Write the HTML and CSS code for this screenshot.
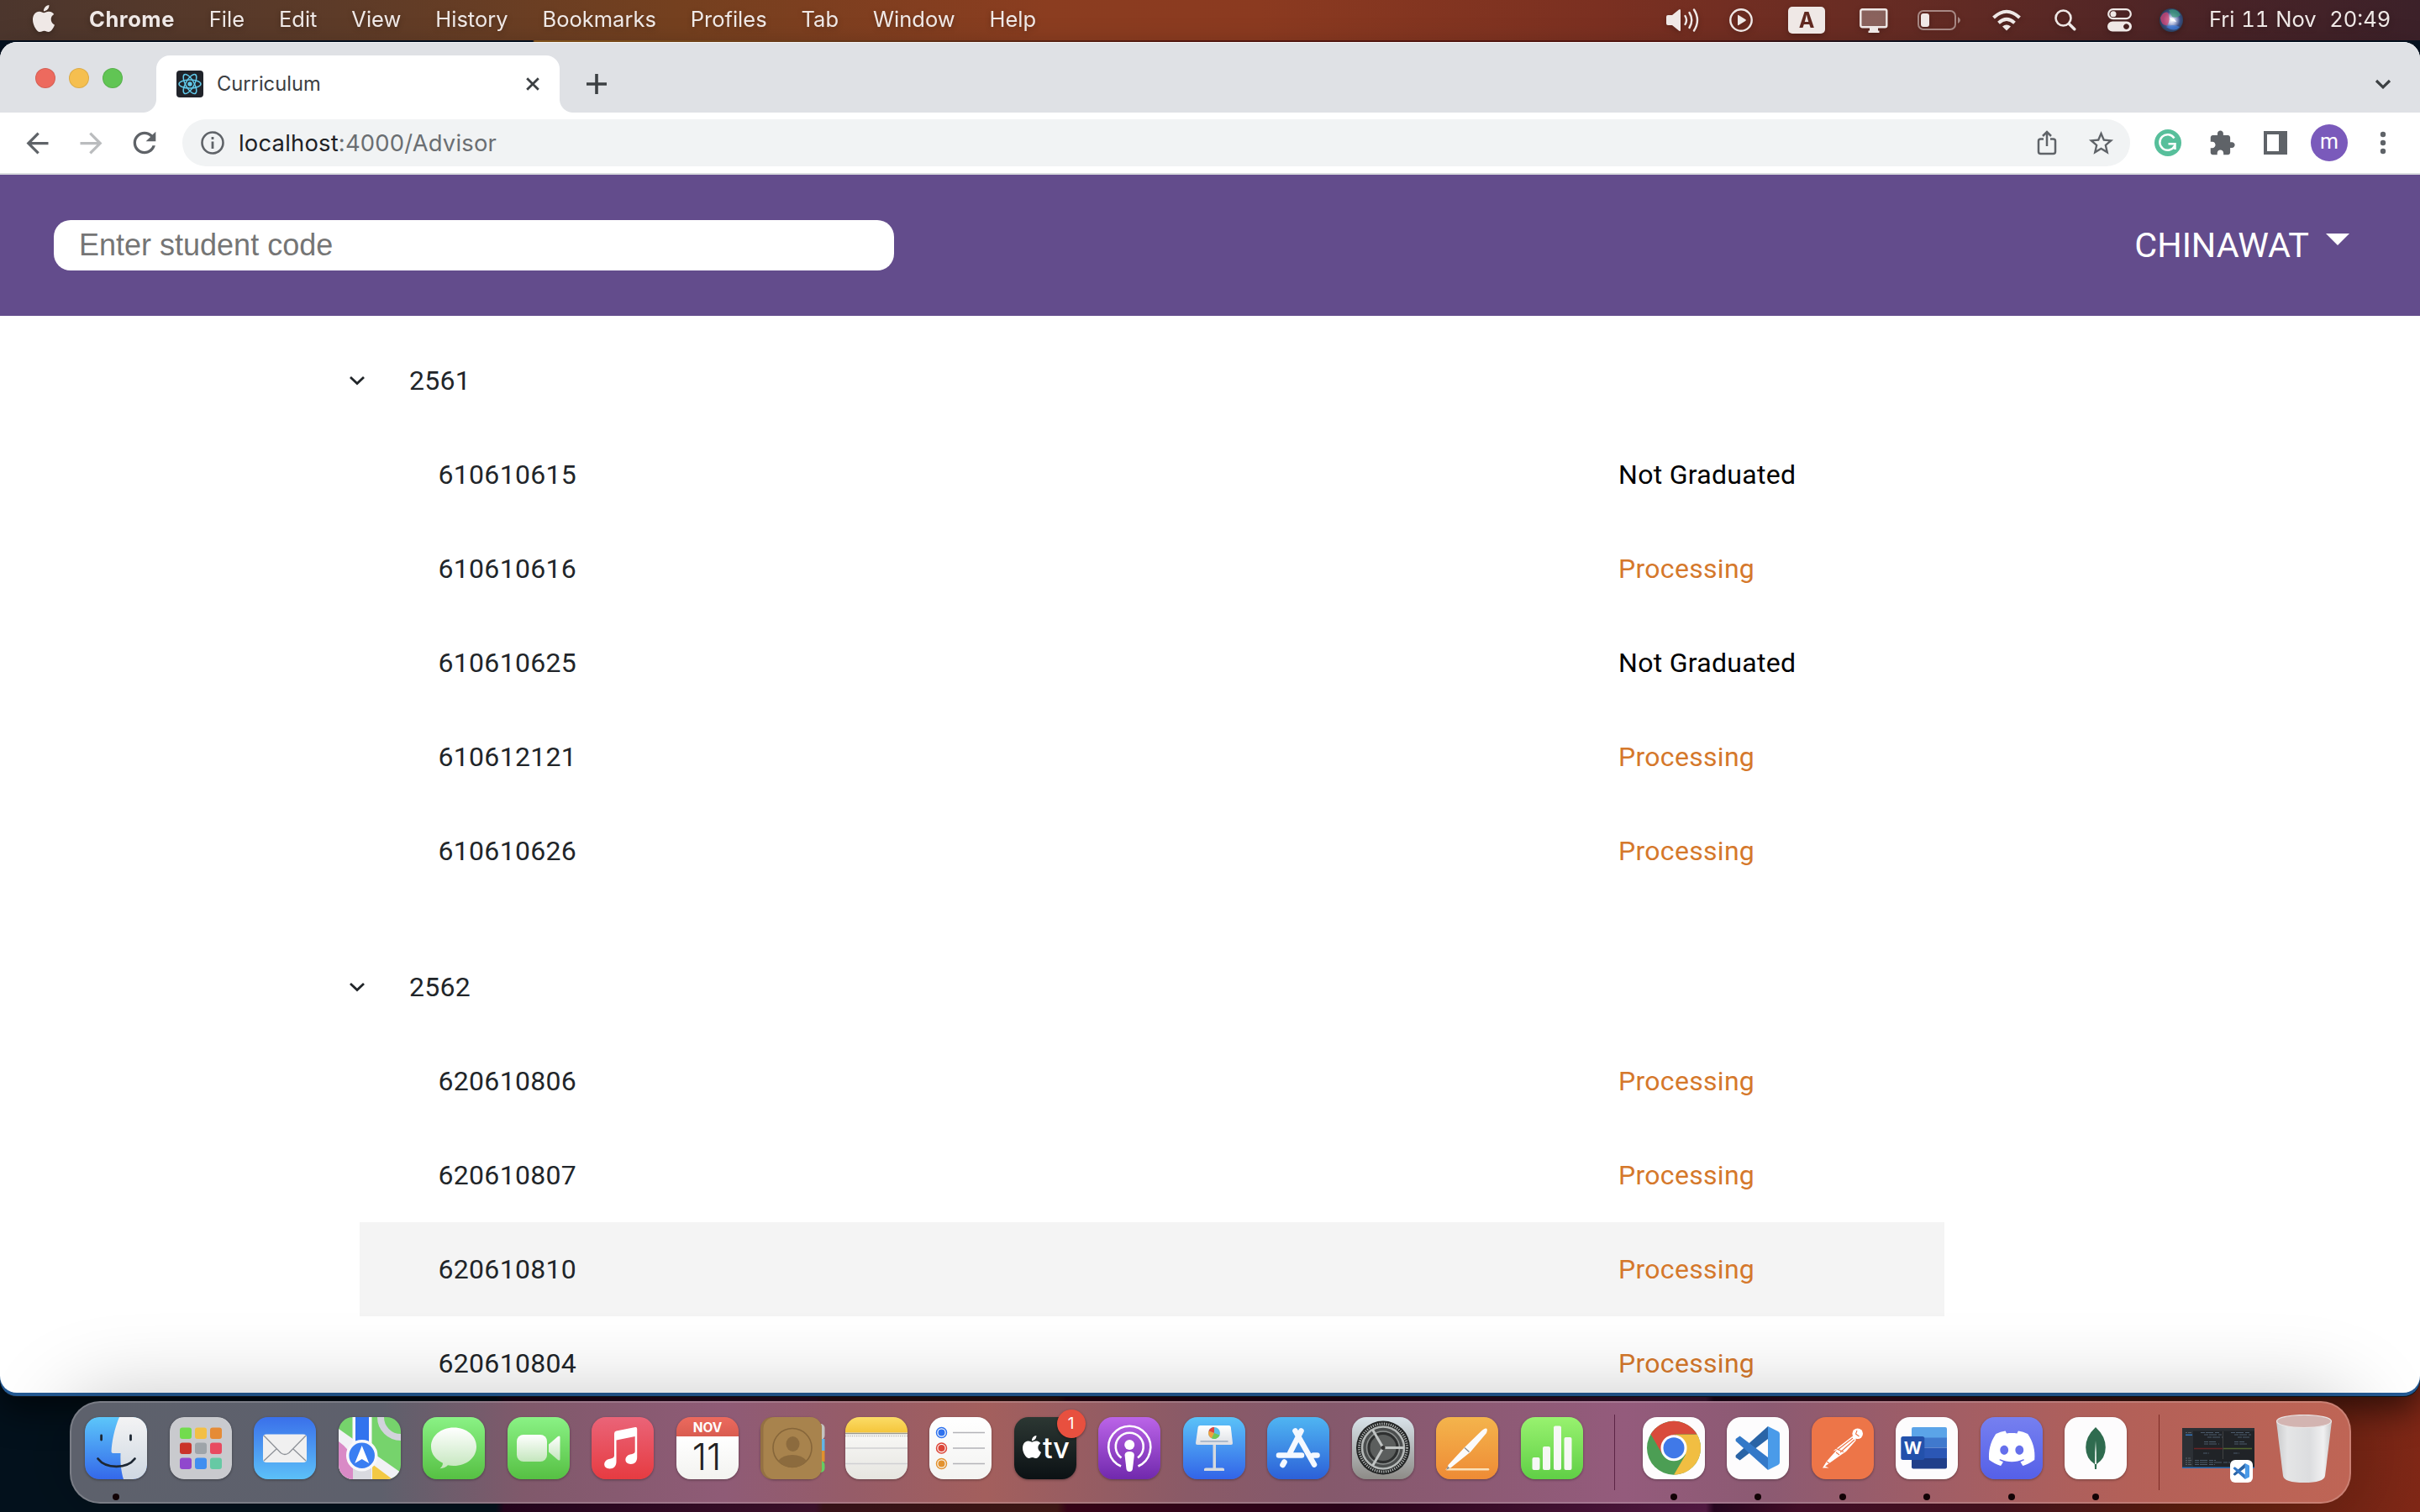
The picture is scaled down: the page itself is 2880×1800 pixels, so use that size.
FILE: index.html
```html
<!DOCTYPE html>
<html lang="en">
<head>
<meta charset="utf-8">
<title>Curriculum</title>
<link rel="stylesheet" href="styles.css">
</head>
<body>
<svg class="defs" width="0" height="0" aria-hidden="true">
  <defs>
    <linearGradient id="finder" x1="0" y1="0" x2="0" y2="1"><stop offset="0" stop-color="#5cc6fa"/><stop offset="1" stop-color="#3468ea"/></linearGradient>
    <linearGradient id="face" x1="0" y1="0" x2="0" y2="1"><stop offset="0" stop-color="#f3f3f4"/><stop offset="1" stop-color="#cfd8e2"/></linearGradient>
    <linearGradient id="gloss" x1="0" y1="0" x2="0" y2="1"><stop offset="0" stop-color="#ffffff"/><stop offset="1" stop-color="#c4e6bd"/></linearGradient>
    <linearGradient id="silver" x1="0" y1="0" x2="0" y2="1"><stop offset="0" stop-color="#ffffff"/><stop offset="1" stop-color="#dcdfe4"/></linearGradient>
    <linearGradient id="bin" x1="0" y1="0" x2="1" y2="0"><stop offset="0" stop-color="#c9cacc"/><stop offset=".2" stop-color="#e4e5e6"/><stop offset=".6" stop-color="#dcdddf"/><stop offset=".85" stop-color="#f0f0f1"/><stop offset="1" stop-color="#c8c9ca"/></linearGradient>
    <radialGradient id="siri" cx=".52" cy=".5" r=".55"><stop offset="0" stop-color="#ffffff"/><stop offset=".3" stop-color="#b6bfe0"/><stop offset=".65" stop-color="#3c4f86"/><stop offset="1" stop-color="#233a4e"/></radialGradient>
    <symbol id="apple" viewBox="0 0 24 24"><path d="M12.152 6.896c-.948 0-2.415-1.078-3.96-1.04-2.04.027-3.91 1.183-4.961 3.014-2.117 3.675-.546 9.103 1.519 12.09 1.013 1.454 2.208 3.09 3.792 3.039 1.52-.065 2.09-.987 3.935-.987 1.831 0 2.35.987 3.96.948 1.637-.026 2.676-1.48 3.676-2.948 1.156-1.688 1.636-3.325 1.662-3.415-.039-.013-3.182-1.221-3.22-4.857-.026-3.04 2.48-4.494 2.597-4.559-1.429-2.09-3.623-2.324-4.39-2.376-2-.156-3.675 1.09-4.61 1.09zM15.53 3.83c.843-1.012 1.4-2.427 1.245-3.83-1.207.052-2.662.805-3.532 1.818-.78.896-1.454 2.338-1.273 3.714 1.338.104 2.715-.688 3.559-1.701"/></symbol>
    <symbol id="vscode" viewBox="0 0 74 74">
      <path fill="#2a64a6" d="M49 11 10.600 45.500V48l5 3.500L49 26z"/>
      <path fill="#3479c8" d="M49 63 10.600 28.500V26l5-3.500L49 48z"/>
      <path fill="#4a9be9" d="M49 11q0 0 1 .4L61 17q2 1 2 3v34q0 2-2 3L50 62.600q-1 .4-1 .4z"/>
    </symbol>
  </defs>
</svg>

<header class="menubar">
  <svg class="apple" viewBox="0 0 24 24"><use href="#apple"/></svg>
  <nav class="menus">
    <span class="menu app-name">Chrome</span><span class="menu">File</span><span class="menu">Edit</span><span class="menu">View</span><span class="menu">History</span><span class="menu">Bookmarks</span><span class="menu">Profiles</span><span class="menu">Tab</span><span class="menu">Window</span><span class="menu">Help</span>
  </nav>
  <div class="status">
    <svg class="st-sound" width="39" height="30" viewBox="0 0 39 30"><path fill="currentColor" d="M0 11q0-2 2-2h5l8-6.500q2-1.500 2 1v23q0 2.500-2 1l-8-6.500H2q-2 0-2-2z"/><g fill="none" stroke="currentColor" stroke-width="2.400" stroke-linecap="round"><path d="M22.500 10q3 5 0 10M27.500 6q5.500 9 0 18M33 2.500q8 12.500 0 25"/></g></svg>
    <svg class="st-play" width="28" height="28" viewBox="0 0 28 28"><circle cx="14" cy="14" r="12.700" fill="none" stroke="currentColor" stroke-width="2.400"/><path fill="currentColor" d="M10 8.500v11q0 1 1 .5l8.500-5.300q.8-.7 0-1.400L11 8q-1-.5-1 .5z"/></svg>
    <span class="st-input">A</span>
    <svg class="st-display" width="34" height="30" viewBox="0 0 34 30"><rect x="1.300" y="2.300" width="31" height="21" rx="2" fill="#ffffff" fill-opacity=".27" stroke="currentColor" stroke-width="2.400"/><path fill="currentColor" d="M12 24h10v3.500h1.500V30h-13v-2.500H12z"/></svg>
    <svg class="st-battery" width="51" height="24" viewBox="0 0 51 24"><rect x="1" y="1" width="44" height="22" rx="6" fill="none" stroke="currentColor" stroke-opacity=".5" stroke-width="2"/><path fill="currentColor" fill-opacity=".5" d="M48 8q6 4 0 8z"/><rect x="4" y="4" width="10" height="16" rx="3" fill="currentColor"/></svg>
    <svg class="st-wifi" width="34" height="26" viewBox="0 0 34 26"><g fill="none" stroke="currentColor" stroke-width="4"><path d="M1.500 10q15.500-14.500 31 0"/><path d="M7.500 16.200q9.500-8.700 19 0"/></g><path fill="currentColor" d="m17 25.500-5-5q5-4 10 0z"/></svg>
    <svg class="st-search" width="26" height="26" viewBox="0 0 26 26"><circle cx="10.500" cy="10.500" r="9" fill="none" stroke="currentColor" stroke-width="2.600"/><path stroke="currentColor" stroke-width="3.400" stroke-linecap="round" d="m17.500 17.500 6.300 6.300"/></svg>
    <svg class="st-control" width="29" height="28" viewBox="0 0 29 28"><rect x="1.200" y="1.200" width="26.600" height="11" rx="5.500" fill="none" stroke="currentColor" stroke-width="2.200"/><circle cx="7" cy="6.700" r="3.500" fill="currentColor"/><path fill="currentColor" fill-rule="evenodd" d="M6 15.500h17a6 6 0 0 1 0 12H6a6 6 0 0 1 0-12zm16.500 2.700a3.400 3.400 0 1 0 .01 0z"/></svg>
    <svg class="st-siri" width="28" height="28" viewBox="0 0 28 28"><circle cx="14" cy="14" r="14" fill="url(#siri)"/><path fill="#d2416f" fill-opacity=".75" d="M1 11q4-8 9-6 4 9-1 15-7 1-8-9z"/><path fill="#3e9c7c" fill-opacity=".75" d="M11 2q10-3 14 6-4 4-10 2z"/><path fill="#3f7fe0" fill-opacity=".7" d="M8 22q8-4 16 0-6 7-16 0z"/><path fill="#fff" d="m12 11 5 1 3 4-5-1z"/></svg>
    <span class="clock">Fri 11 Nov&nbsp; 20:49</span>
  </div>
</header>

<main class="window">
  <div class="tabstrip">
    <div class="lights"><i class="light red"></i><i class="light yellow"></i><i class="light lime"></i></div>
    <div class="tab">
      <svg class="favicon" viewBox="0 0 32 32"><rect width="32" height="32" rx="4" fill="#20232a"/><g fill="none" stroke="#61c9ea" stroke-width="1.500"><ellipse cx="16" cy="16" rx="13" ry="5"/><ellipse cx="16" cy="16" rx="13" ry="5" transform="rotate(60 16 16)"/><ellipse cx="16" cy="16" rx="13" ry="5" transform="rotate(120 16 16)"/></g><circle cx="16" cy="16" r="2.700" fill="#61c9ea"/></svg>
      <span class="tab-title">Curriculum</span>
      <svg class="tab-close" viewBox="0 0 16 16"><path d="m1.200 1.200 13.600 13.600m0-13.600L1.200 14.800" stroke="#3c4043" stroke-width="2.800"/></svg>
    </div>
    <svg class="new-tab" viewBox="0 0 24 24"><path d="M12 0v24M0 12h24" stroke="#3c4043" stroke-width="3.600"/></svg>
    <svg class="tab-search" viewBox="0 0 20 12"><path d="m2 2 8 7.800L18 2" fill="none" stroke="#3c4043" stroke-width="3.200"/></svg>
  </div>

  <div class="toolbar">
    <span class="cell"><svg width="39" height="39" viewBox="0 0 24 24"><path fill="#5f6368" d="M20 11H7.830l5.590-5.590L12 4l-8 8 8 8 1.410-1.410L7.830 13H20v-2z"/></svg></span>
    <span class="cell"><svg width="39" height="39" viewBox="0 0 24 24"><path fill="#babcbe" d="m12 4-1.410 1.410L16.170 11H4v2h12.170l-5.580 5.590L12 20l8-8z"/></svg></span>
    <span class="cell"><svg width="40" height="40" viewBox="0 0 24 24"><path fill="#5f6368" d="M17.650 6.350C16.200 4.900 14.210 4 12 4c-4.420 0-7.990 3.580-7.990 8s3.570 8 7.990 8c3.730 0 6.840-2.550 7.730-6h-2.080c-.82 2.330-3.040 4-5.650 4-3.310 0-6-2.690-6-6s2.690-6 6-6c1.660 0 3.140.69 4.220 1.780L13 11h7V4l-2.350 2.350z"/></svg></span>
    <div class="omnibox">
      <svg class="info" viewBox="0 0 28 28"><circle cx="14" cy="14" r="12.500" fill="none" stroke="#5f6368" stroke-width="2.600"/><path fill="#5f6368" d="M12.600 12.500h2.800V21h-2.800zM12.600 7h2.800v3h-2.800z"/></svg>
      <span class="url"><b>localhost</b>:4000/Advisor</span>
      <span class="cell"><svg width="24" height="30" viewBox="0 0 24 30"><g fill="none" stroke="#5f6368" stroke-width="2.500"><path d="M8 10.500H4.500q-2.500 0-2.500 2.500v12.500Q2 28 4.500 28h15q2.500 0 2.500-2.500V13q0-2.500-2.500-2.500H16"/><path d="M12 19V2.500M7 7l5-5 5 5"/></g></svg></span>
      <span class="cell"><svg width="35" height="35" viewBox="0 0 24 24"><path fill="#5f6368" d="m22 9.240-7.190-.62L12 2 9.190 8.630 2 9.240l5.460 4.730L5.820 21 12 17.270 18.180 21l-1.630-7.030L22 9.240zM12 15.400l-3.760 2.270 1-4.280-3.320-2.880 4.380-.38L12 6.100l1.710 4.040 4.380.38-3.320 2.880 1 4.280L12 15.400z"/></svg></span>
    </div>
    <span class="cell"><svg width="32" height="32" viewBox="0 0 32 32"><circle cx="16" cy="16" r="16" fill="#57bf9b"/><path fill="none" stroke="#fff" stroke-width="2.500" d="M23.500 10.500A9.300 9.300 0 1 0 24 19.500M16.500 17.200h8V24"/></svg></span>
    <span class="cell"><svg width="33" height="33" viewBox="0 0 24 24"><path fill="#5f6368" d="M20.500 11H19V7c0-1.100-.9-2-2-2h-4V3.500C13 2.120 11.880 1 10.500 1S8 2.120 8 3.500V5H4c-1.100 0-1.990.9-1.990 2v3.800H3.500c1.490 0 2.700 1.210 2.700 2.700s-1.210 2.700-2.700 2.700H2V20c0 1.100.9 2 2 2h3.800v-1.500c0-1.490 1.210-2.700 2.700-2.700 1.490 0 2.700 1.210 2.700 2.700V22H17c1.100 0 2-.9 2-2v-4h1.500c1.380 0 2.500-1.120 2.500-2.500S21.880 11 20.500 11z"/></svg></span>
    <span class="cell"><svg width="28" height="28" viewBox="0 0 28 28"><path fill="#5f6368" fill-rule="evenodd" d="M0 0h28v28H0zM4 4v20h14V4z"/></svg></span>
    <span class="cell"><span class="avatar">m</span></span>
    <span class="cell"><svg width="8" height="28" viewBox="0 0 8 28"><g fill="#5f6368"><circle cx="4" cy="4" r="3.200"/><circle cx="4" cy="14" r="3.200"/><circle cx="4" cy="24" r="3.200"/></g></svg></span>
  </div>

  <div class="page">
    <div class="topbar">
      <input class="search" type="text" placeholder="Enter student code">
      <div class="account">CHINAWAT<i class="caret"></i></div>
    </div>
    <section class="group">
      <div class="group-head"><svg viewBox="0 0 20 12"><path d="m2 2 8 7.500L18 2" fill="none" stroke="#212529" stroke-width="2.800"/></svg><span>2561</span></div>
      <div class="row"><span>610610615</span><span class="state">Not Graduated</span></div>
      <div class="row"><span>610610616</span><span class="state pending">Processing</span></div>
      <div class="row"><span>610610625</span><span class="state">Not Graduated</span></div>
      <div class="row"><span>610612121</span><span class="state pending">Processing</span></div>
      <div class="row"><span>610610626</span><span class="state pending">Processing</span></div>
    </section>
    <section class="group">
      <div class="group-head"><svg viewBox="0 0 20 12"><path d="m2 2 8 7.500L18 2" fill="none" stroke="#212529" stroke-width="2.800"/></svg><span>2562</span></div>
      <div class="row"><span>620610806</span><span class="state pending">Processing</span></div>
      <div class="row"><span>620610807</span><span class="state pending">Processing</span></div>
      <div class="row hovered"><span>620610810</span><span class="state pending">Processing</span></div>
      <div class="row"><span>620610804</span><span class="state pending">Processing</span></div>
    </section>
  </div>
</main>

<footer class="dock">
  <div class="apps">
    <div class="app running"><svg viewBox="0 0 74 74"><rect width="74" height="74" rx="17" fill="url(#finder)"/><path fill="url(#face)" d="M41 0C35 14 32 30 31.500 41q0 2 2 2H42.500C42 56 43.500 66 46 74H57q17 0 17-17V17Q74 0 57 0z"/><g fill="none" stroke="#1d2733" stroke-width="2.800" stroke-linecap="round"><path d="M19.600 22v5M54.500 22v5M15.500 49.500q7 9.300 22 9.300t22-9.300"/></g></svg></div>
    <div class="app"><svg viewBox="0 0 74 74"><rect width="74" height="74" rx="17" fill="#c9cace"/><rect x="12" y="12.500" width="14" height="13.500" rx="3" fill="#72dc4e"/><rect x="30" y="12.500" width="14" height="13.500" rx="3" fill="#f3bf45"/><rect x="48" y="12.500" width="14" height="13.500" rx="3" fill="#e58b36"/><rect x="12" y="30.500" width="14" height="13.500" rx="3" fill="#ca3329"/><rect x="30" y="30.500" width="14" height="13.500" rx="3" fill="#9ea4a9"/><rect x="48" y="30.500" width="14" height="13.500" rx="3" fill="#e84a60"/><rect x="12" y="48.500" width="14" height="13.500" rx="3" fill="#9048cd"/><rect x="30" y="48.500" width="14" height="13.500" rx="3" fill="#3f8ef0"/><rect x="48" y="48.500" width="14" height="13.500" rx="3" fill="#66c9a4"/></svg></div>
    <div class="app mail"><svg viewBox="0 0 74 74"><rect x="11" y="20.500" width="52" height="33.500" rx="4" fill="#f0f0f0"/><g fill="none" stroke="#8e9298" stroke-width="1.300"><path d="m12 52 15-14M62 52 47 38M12 22l20 20.500q5 4 10 0L62 22"/></g></svg></div>
    <div class="app maps"><svg viewBox="0 0 74 74"><path fill="#f1f1f5" d="M0 14 74 66v8H0z"/><path fill="#d98ac6" d="M0 29q14 10 17 22v23H0z"/><path fill="#f3c945" d="M40 56 64 74H40z"/><path fill="#d9dae0" d="M17 55h22v19H17z"/><path fill="#f8f8fb" d="M16.500 0h23v40h-23z"/><path fill="#3273ee" d="M20 0h16v34H20z"/><circle cx="74" cy="0" r="24" fill="none" stroke="#d2d3dc" stroke-width="8"/><circle cx="27.700" cy="45.700" r="17" fill="#3a7ef2" stroke="#f8f8fb" stroke-width="3.500"/><path fill="#fff" d="m27.700 34-8.500 21 8.500-5 8.500 5z"/></svg></div>
    <div class="app green"><svg viewBox="0 0 74 74"><path fill="url(#gloss)" d="M37 12.500c15.500 0 27 10 27 22.700S52.500 58 37 58q-4 0-7-.8-3 3.500-9.500 4 3.500-3 3.500-6.500-14-7-14-19.500C10 22.500 21.500 12.500 37 12.500z"/></svg></div>
    <div class="app green"><svg viewBox="0 0 74 74"><rect x="11" y="21" width="36" height="32" rx="8" fill="url(#gloss)"/><path fill="url(#gloss)" d="M49 32.500 60 23q2.500-1.500 2.500 1v26q0 2.500-2.500 1l-11-9.500z"/></svg></div>
    <div class="app music"><svg viewBox="0 0 74 74"><path fill="#fff" d="m27 19.500q0-2.500 2.500-3L52 12q2.200-.4 2.200 2V48c0 5-3 8-7.500 8-8 0-8.500-9.500-1-11.500 4-1 6-1 6-4V23L29.500 27.500V53c0 5-3 8.500-8 8.500-8 0-8.500-9.500-1-11.500 4.500-1 6.500-1.500 6.500-4.500z"/></svg></div>
    <div class="app calendar"><svg viewBox="0 0 74 74"><text x="37" y="18" class="cal-month">NOV</text><text x="36" y="62.500" class="cal-day">11</text></svg></div>
    <div class="app"><svg viewBox="0 0 78 74" class="wide"><rect x="56" y="8" width="20.500" height="19" rx="5" fill="#c4c4c0"/><rect x="56" y="26" width="20.500" height="14" fill="#62b4e6"/><rect x="56" y="40" width="20.500" height="13" fill="#e2912f"/><rect x="56" y="52" width="20.500" height="14" rx="5" fill="#65cd63"/><rect width="73" height="74" rx="14" fill="#947143"/><rect x="3.500" width="69.500" height="74" rx="14" fill="#a8834d"/><g fill="none" stroke="#86663a" stroke-width="1.600"><circle cx="38" cy="36.500" r="23"/></g><ellipse cx="38.500" cy="32" rx="8" ry="9" fill="#8c6b3e"/><path fill="#8c6b3e" d="M21 52q6-7 17-7t17 7q-7 8-17 8t-17-8z"/></svg></div>
    <div class="app notes"><svg viewBox="0 0 74 74"><path stroke="#9b9a90" stroke-width="1.500" d="M0 19.500h74"/><path stroke="#b8b8b4" stroke-width="1.300" stroke-dasharray="1.300 1.300" d="M0 22.500h74"/><path stroke="#cfcfd2" stroke-width="1.500" d="M0 37h74M0 55.500h74"/></svg></div>
    <div class="app reminders"><svg viewBox="0 0 74 74"><g fill="none" stroke-width="1.500"><circle cx="14.500" cy="18.500" r="6" stroke="#2f72ee"/><circle cx="14.500" cy="37" r="6" stroke="#dc4538"/><circle cx="14.500" cy="55.500" r="6" stroke="#e3922f"/></g><circle cx="14.500" cy="18.500" r="4" fill="#2f72ee"/><circle cx="14.500" cy="37" r="4" fill="#dc4538"/><circle cx="14.500" cy="55.500" r="4" fill="#e3922f"/><path stroke="#b3b3b8" stroke-width="1.500" d="M28 18.500h38M28 37h38M28 55.500h38"/></svg></div>
    <div class="app tv"><svg viewBox="0 0 74 74"><use href="#apple" x="7.500" y="22" width="27" height="27" fill="#fff"/><text x="34" y="48.500" class="tv-text">tv</text></svg><span class="badge">1</span></div>
    <div class="app podcasts"><svg viewBox="0 0 74 74"><g fill="none" stroke="#fff" stroke-width="2.600"><path d="M27 58.500a25 25 0 1 1 20.500 0"/><path d="M27.500 48.500a16.500 16.500 0 1 1 19.500 0"/></g><circle cx="37.200" cy="33" r="6" fill="#fff"/><path fill="#fff" d="M31.500 45q.5-4 5.700-4t5.700 4l-2 17q-.7 3-3.700 3t-3.700-3z"/></svg></div>
    <div class="app keynote"><svg viewBox="0 0 74 74"><path fill="#d5d9de" d="M35.500 33h3.500v28h-3.500zM25 62q0-1.500 2-1.500h20q2 0 2 1.500v2H25z"/><path fill="url(#silver)" d="M20.500 10h34q2 0 2.300 2L59 31q.2 2-2 2H17q-2.200 0-2-2l2.700-19q.3-2 2.800-2z"/><path fill="#a4b5c7" d="M20.500 28h33v1.800h-33z"/><circle cx="37" cy="19" r="7" fill="#5cbde8"/><path fill="#e0453f" d="M37 19v-7a7 7 0 0 0-6.500 4.500z"/><path fill="#f0a13c" d="m37 19-6.500-2.500A7 7 0 0 0 34 25.300z"/><path fill="#6ec858" d="m37 19-3 6.300a7 7 0 0 0 9.500-3.800z"/></svg></div>
    <div class="app store"><svg viewBox="0 0 74 74"><g fill="none" stroke="#f4f8ff" stroke-width="6.600" stroke-linecap="round"><path d="M40.500 16.500 27.500 42M33.500 16.500l22.500 40M14 45.500h27M55 45.500h4.500M20.500 53.500l-2 3.500"/></g></svg></div>
    <div class="app settings"><svg viewBox="0 0 74 74"><circle cx="37" cy="36.500" r="32" fill="#232525"/><circle cx="37" cy="36.500" r="28.500" fill="none" stroke="#b5b9b8" stroke-width="3" stroke-dasharray="1.200 1.500"/><circle cx="37" cy="36.500" r="25" fill="#4b4e4e" stroke="#b5b9b8" stroke-width="2.600"/><circle cx="37" cy="36.500" r="17" fill="#5b5e5d" stroke="#2e3030" stroke-width="3"/><circle cx="37" cy="36.500" r="19.500" fill="none" stroke="#8b8f8e" stroke-width="1.500"/><path stroke="#c1c5c4" stroke-width="3" d="M37 36.500h25M37 36.500 24.500 15M37 36.500 24.500 58"/><circle cx="37" cy="36.500" r="2.500" fill="#333"/></svg></div>
    <div class="app pages"><svg viewBox="0 0 74 74"><path stroke="#fbe1b9" stroke-width="2.600" stroke-linecap="round" d="M13 62.300h49"/><path fill="#fbfbfb" d="M53.500 17q4-4 6.200-3.500T60 19L41 41.500 18 60l-5 2.500 1.500-5.500L34 36z"/><path fill="#8f8f8f" d="m12 63 2-4.500 2.300 2.300zM34.500 36l5.500 5-1 1-5.500-5z"/></svg></div>
    <div class="app numbers"><svg viewBox="0 0 74 74"><g fill="#f6f8f5"><rect x="13.500" y="48" width="9" height="15" rx="2"/><rect x="26" y="35" width="9" height="28" rx="2"/><rect x="39" y="10.500" width="9" height="52.500" rx="2"/><rect x="51.500" y="24" width="9" height="39" rx="2"/></g></svg></div>
  </div>
  <i class="divider"></i>
  <div class="apps recent">
    <div class="app white running"><svg viewBox="0 0 74 74"><circle cx="37" cy="36.700" r="32" fill="#4c9e54"/><path fill="#d94b3b" d="M37 36.700 9.500 20.500A32 32 0 0 1 64.500 20.500H37z"/><path fill="#f1be42" d="M37 20.700h27.700A32 32 0 0 1 37 68.700l14-24z"/><path fill="#d94b3b" d="M9.500 20.300 23.500 44.500 37 36.700 40 20.700z"/><circle cx="37" cy="36.700" r="15.500" fill="#fff"/><circle cx="37" cy="36.700" r="12.500" fill="#4079e8"/></svg></div>
    <div class="app white running"><svg viewBox="0 0 74 74"><use href="#vscode"/></svg></div>
    <div class="app postman running"><svg viewBox="0 0 74 74"><circle cx="54.700" cy="19.700" r="6.300" fill="#fff"/><path fill="#fff" d="M49 22.500q4 1 3.500 5.500L41 41l-6 4-19 13.500 4.500 2H13l5-8L30 39l-4.500 1.500z"/><path fill="none" stroke="#ed7548" stroke-width="1.100" d="M31 39 49 25M34 42l17-15M29 37.500l9 4M54 16l-1.500 4 4 3M33 45l-4-3M18 53l3 2"/></svg></div>
    <div class="app white running"><svg viewBox="0 0 74 74"><path fill="#5ba4e8" d="M19 14q0-2 2-2h38q2 0 2 2v11H19z"/><path fill="#4079cd" d="M19 24.500h42v12H19z"/><path fill="#2b57b5" d="M19 36.500h42V49H19z"/><path fill="#203f8a" d="M19 49h42v10.500q0 2-2 2H21q-2 0-2-2z"/><rect x="6.300" y="23" width="28" height="28" rx="2.500" fill="#2351ab"/><text x="20.300" y="43.800" class="word-text">W</text></svg></div>
    <div class="app discord running"><svg viewBox="0 0 74 74"><g transform="translate(10 10) scale(2.270)"><path fill="#fff" d="M20.317 4.370a19.791 19.791 0 00-4.885-1.515.074.074 0 00-.079.037c-.211.375-.445.865-.608 1.249-1.845-.276-3.680-.276-5.487 0-.164-.393-.406-.874-.618-1.249a.077.077 0 00-.079-.037 19.736 19.736 0 00-4.885 1.515.070.070 0 00-.032.028C.533 9.046-.319 13.580.099 18.058a.082.082 0 00.031.056c2.053 1.508 4.041 2.423 5.993 3.029a.078.078 0 00.084-.028c.462-.630.873-1.295 1.226-1.994a.076.076 0 00-.042-.106c-.653-.248-1.274-.550-1.872-.892a.077.077 0 01-.008-.128c.126-.094.252-.192.372-.291a.074.074 0 01.078-.010c3.928 1.793 8.180 1.793 12.061 0a.074.074 0 01.079.009c.120.099.246.198.373.292a.077.077 0 01-.007.128 12.299 12.299 0 01-1.873.891.077.077 0 00-.041.107c.360.698.772 1.363 1.225 1.993a.076.076 0 00.084.029c1.961-.607 3.950-1.522 6.002-3.029a.077.077 0 00.031-.055c.500-5.177-.838-9.674-3.549-13.660a.061.061 0 00-.031-.029zM8.020 15.331c-1.183 0-2.157-1.086-2.157-2.419 0-1.333.956-2.419 2.157-2.419 1.211 0 2.176 1.095 2.157 2.419 0 1.333-.956 2.419-2.157 2.419zm7.975 0c-1.183 0-2.157-1.086-2.157-2.419 0-1.333.955-2.419 2.157-2.419 1.211 0 2.176 1.095 2.157 2.419 0 1.333-.946 2.419-2.157 2.419z"/></g></svg></div>
    <div class="app white running"><svg viewBox="0 0 74 74"><path fill="#2f6b4f" d="M37 12Q48.800 23 48.800 36T38.200 56L38 62h-2l-.2-6Q25.200 49 25.200 36T37 12z"/><path fill="#e4ece7" d="M37 28q1.200 14 1 28h-2q-.2-14 1-28z"/></svg></div>
  </div>
  <i class="divider"></i>
  <div class="minimized">
    <svg class="thumb" viewBox="0 0 86 48"><rect width="86" height="48" fill="#202327"/><path fill="#2c3035" d="M0 0h86v3.500H0zM0 3h13v43H0z"/><path fill="#2f71b8" d="M0 46.500h86V48H0zM4 7.500h8V9H4z"/><path stroke="#4b5b6b" stroke-width="1" stroke-dasharray="5 1 9 2" d="M22 5.500h22M26 8h21M30 11h18M26 16.500h14M26 19h18M25 30h7M58 5.500h22M62 8h20M66 11h14M62 16.500h12M62 19h16M61 30h7M15 38.500h25M15 41h42M15 43.500h24"/><path stroke="#6a2425" stroke-width="1.500" d="M14 24.500h34"/><path stroke="#52662e" stroke-width="1.500" d="M49 24.500h34"/><path stroke="#555" stroke-width=".6" d="M48.500 4v33"/><path stroke="#596068" stroke-dasharray="2 1 4 1" d="M4 5.500h8M4 36h6M4 38.500h7M4 41h6M4 43.500h7"/></svg>
    <span class="thumb-app"><svg viewBox="0 0 74 74"><use href="#vscode"/></svg></span>
  </div>
  <svg class="trash" viewBox="0 0 66 82"><path fill="url(#bin)" d="M0 8h66l-8 65q-1.500 8-25 8T8 73z"/><ellipse cx="33" cy="8" rx="32.500" ry="7.500" fill="#d3b4b1" stroke="#e9e4e4" stroke-width="1.200"/></svg>
</footer>
</body>
</html>
```
FILE: styles.css
```css
* { box-sizing: border-box; }

body {
  margin: 0;
  width: 2880px;
  height: 1800px;
  overflow: hidden;
  display: flex;
  flex-direction: column;
  font-family: Inter, "Liberation Sans", sans-serif;
  background:
    linear-gradient(90deg, #041020 634px, #8c5a1e 636px, #6e3d1c 1000px, #5a1a12 1400px, #5a1812 2000px, #061224 2300px, #04101f 2880px) 0 48px / 2880px 24px no-repeat,
    linear-gradient(90deg, #04121d 0, #04121d 590px, #28041f 600px, #42122f 970px, #3d141a 980px, #451a17 1258px, #3c0419 1270px, #30041d 1600px, #5a1c49 2030px, #2a0622 2040px, #4a0f2c 2140px, #4b1420 2380px, #61200f 2600px, #802817 2880px) 0 1600px / 2880px 200px no-repeat,
    #04121d;
}

svg { display: block; flex: none; }

/* Menu bar */
.menubar {
  flex: none;
  height: 48px;
  margin-bottom: 2px;
  display: flex;
  align-items: center;
  padding: 0 39px 0 36px;
  color: #efe8e6;
  background: linear-gradient(90deg, #4c362d 0, #5d3b28 400px, #74401f 800px, #8b3d20 1250px, #8b3a20 1500px, #7b3021 1900px, #602a24 2350px, #482327 2650px, #3c2129 2880px);
}
.menubar svg, .menubar span { filter: drop-shadow(0 2px 3px rgba(0, 0, 0, .25)); }
.apple { width: 32px; height: 32px; fill: currentColor; margin-top: -4px; }
.menus { display: flex; gap: 40.900px; margin-left: 38px; font-size: 25.500px; line-height: 48px; margin-top: -2px; }
.app-name { font-weight: 700; letter-spacing: .55px; }
.status { margin-left: auto; display: flex; align-items: center; }
.st-play { margin-left: 36px; }
.st-input {
  margin-left: 42px;
  width: 44px;
  height: 32px;
  border-radius: 5px;
  background: #efe8e6;
  color: #602820;
  font-size: 25px;
  font-weight: 700;
  line-height: 32px;
  text-align: center;
}
.st-display { margin-left: 41px; }
.st-battery { margin-left: 35px; }
.st-wifi { margin-left: 38px; }
.st-search { margin-left: 40px; }
.st-control { margin-left: 37px; }
.st-siri { margin-left: 33px; }
.clock {
  margin: -3px 0 0 31px;
  width: 212px;
  font-size: 25.500px;
  font-variant-numeric: tabular-nums;
  word-spacing: 1px;
  white-space: nowrap;
}

/* Browser window */
.window {
  flex: none;
  height: 1608px;
  border-radius: 20px;
  background: #fff;
  box-shadow: 0 4px 0 #245a94, 0 5px 0 #101418, 0 20px 40px rgba(0, 0, 0, .6);
  overflow: hidden;
}
.tabstrip {
  height: 84px;
  background: #dfe1e5;
  border-top: 1px solid #f4f5f6;
  display: flex;
  align-items: center;
  padding: 15px 34px 0 42px;
}
.lights { display: flex; gap: 16px; width: 144px; margin-top: -14px; }
.light { width: 24px; height: 24px; border-radius: 50%; border: 1px solid rgba(0, 0, 0, .1); }
.red { background: #ed6a5e; }
.yellow { background: #f5bf4f; }
.lime { background: #61c554; }
.tab {
  position: relative;
  width: 480px;
  height: 68px;
  background: #fff;
  border-radius: 16px 16px 0 0;
  display: flex;
  align-items: center;
  padding: 0 24px;
}
.tab::before, .tab::after {
  content: "";
  position: absolute;
  bottom: 0;
  width: 16px;
  height: 16px;
}
.tab::before { left: -16px; background: radial-gradient(circle at 0 0, transparent 15.500px, #fff 16.500px); }
.tab::after { right: -16px; background: radial-gradient(circle at 100% 0, transparent 15.500px, #fff 16.500px); }
.favicon { width: 32px; height: 32px; }
.tab-title { margin: -2px 0 0 16px; font-size: 23.700px; color: #3c4043; }
.tab-close { width: 16px; height: 16px; margin-left: auto; }
.new-tab { width: 24px; height: 24px; margin-left: 32px; }
.tab-search { width: 20px; height: 12px; margin-left: auto; }

.toolbar {
  height: 74px;
  border-bottom: 2px solid #dadce0;
  display: flex;
  align-items: center;
  padding: 0 12px;
}
.cell { flex: none; width: 64px; display: flex; align-items: center; justify-content: center; }
.omnibox {
  flex: 1;
  height: 56px;
  margin: 0 13px;
  border-radius: 28px;
  background: #f1f3f4;
  display: flex;
  align-items: center;
  padding: 0 3px 0 22px;
}
.info { width: 28px; height: 28px; }
.url { flex: 1; margin-left: 17px; font-size: 27.400px; letter-spacing: .2px; color: #6a6e72; }
.url b { font-weight: 400; color: #202124; }
.avatar {
  width: 44px;
  height: 44px;
  border-radius: 50%;
  background: #7a5abb;
  color: #fff;
  font: 25px/42px Roboto, sans-serif;
  text-align: center;
}

/* Page */
.page { font-family: Roboto, sans-serif; font-size: 32px; letter-spacing: .3px; color: #212529; }
.topbar {
  height: 168px;
  padding: 0 84px 0 64px;
  display: flex;
  align-items: center;
  justify-content: space-between;
  background: #634c8c;
}
.search {
  width: 1000px;
  height: 60px;
  border: 0;
  border-radius: 20px;
  padding: 0 30px;
  background: #fff;
  font: 36px "Liberation Sans", Arial, sans-serif;
}
.search::placeholder { color: #757575; }
.account { display: flex; align-items: center; gap: 20px; color: #fff; font-size: 41.300px; letter-spacing: 0; }
.caret { margin-top: -14px; border: 14px solid transparent; border-bottom: 0; border-top-color: #fff; }

.group { width: 1886px; margin: 21px 0 50px 428px; }
.group + .group { margin-top: 0; }
.group-head { height: 112px; display: flex; align-items: center; margin-left: -13px; }
.group-head svg { width: 20px; height: 12px; }
.group-head span { margin-left: 52px; }
.row { height: 112px; display: grid; grid-template-columns: 1404.500px 1fr; align-items: center; padding-left: 93.500px; }
.hovered { background: #f4f4f4; }
.state { color: #000; }
.pending { color: #d5782b; }

/* Dock */
.dock {
  position: relative;
  flex: none;
  align-self: flex-start;
  width: 2715px;
  height: 122px;
  margin: 10px 0 0 83px;
  padding: 0 21px 0 16px;
  border: 2px solid rgba(255, 255, 255, .18);
  border-radius: 36px;
  display: flex;
  align-items: center;
  background: linear-gradient(90deg, #5d616c 0, #5e606c 370px, #80596b 540px, #8f5b76 780px, #965c68 930px, #a35f5d 1090px, #8a5a67 1330px, #85596c 1500px, #945b7c 1850px, #8c5a72 2020px, #a35e64 2250px, #b36058 2450px, #bf6555 2715px);
  background-origin: border-box;
  background-clip: border-box;
  box-shadow: 0 0 100px rgba(0, 0, 0, .25);
}
.apps { display: flex; gap: 26.500px; margin-top: -10px; }
.app { position: relative; flex: none; width: 74px; height: 74px; border-radius: 17px; box-shadow: 0 1px 3px rgba(0, 0, 0, .35); }
.app > svg { width: 74px; height: 74px; border-radius: 17px; }
.app > .wide { width: 78px; border-radius: 0; }
.running::after {
  content: "";
  position: absolute;
  left: 33px;
  top: 91px;
  width: 8px;
  height: 8px;
  border-radius: 50%;
  background: #120306;
}
.mail { background: linear-gradient(#3a70ea, #5cc0f8); }
.maps { background: #76d36c; }
.green { background: linear-gradient(#8af285, #56c043); }
.music { background: linear-gradient(#ea6478, #e63b41); }
.calendar { background: linear-gradient(#ec6a5e 0, #d95c50 23px, #fff 23px, #f3f3f0 100%); }
.notes { background: linear-gradient(#fbdc67 0, #f5c63c 18px, #f8f8f6 19px, #e6e5e0 100%); }
.reminders { background: linear-gradient(#fff, #f3f3f1); }
.tv { background: linear-gradient(#2c3733, #0b1114); }
.podcasts { background: linear-gradient(#bb64e8, #7129ad); }
.keynote { background: linear-gradient(#5bc3f8, #3264e8); }
.store { background: linear-gradient(#4fb5f2, #2c60d8); }
.settings { background: linear-gradient(#d9e3ea, #8d8b87); }
.pages { background: linear-gradient(#f4b44c, #ee8b35); }
.numbers { background: linear-gradient(#98f26f, #60cf46); }
.white { background: #fdfcfd; }
.postman { background: #ed7548; }
.discord { background: linear-gradient(#7680f0, #5560e8); }
.cal-month { font: 700 15.500px Inter, sans-serif; fill: #fff; text-anchor: middle; }
.cal-day { font: 300 44px Inter, sans-serif; fill: #222; text-anchor: middle; }
.tv-text { font: 500 34px Inter, sans-serif; fill: #fff; }
.word-text { font: 700 21px "Open Sans", sans-serif; fill: #fff; text-anchor: middle; }
.badge {
  position: absolute;
  left: 51px;
  top: -9px;
  width: 34px;
  height: 34px;
  border-radius: 50%;
  background: #e8503f;
  color: #fff;
  font-size: 19px;
  line-height: 34px;
  text-align: center;
  box-shadow: 0 1px 3px rgba(0, 0, 0, .4);
}
.divider { width: 2px; height: 90px; margin: 0 33px 0 37px; background: #5c2546; }
.recent + .divider { margin: 0 27px 0 37.500px; background: #7c2c26; }
.minimized { position: relative; width: 86px; height: 48px; margin-top: -10px; }
.thumb { width: 86px; height: 48px; }
.thumb-app { position: absolute; left: 57px; top: 38px; width: 27px; height: 27px; border-radius: 6px; background: #fff; }
.thumb-app svg { width: 27px; height: 27px; }
.trash { width: 66px; height: 82px; margin: -8px 0 0 26px; }
```
